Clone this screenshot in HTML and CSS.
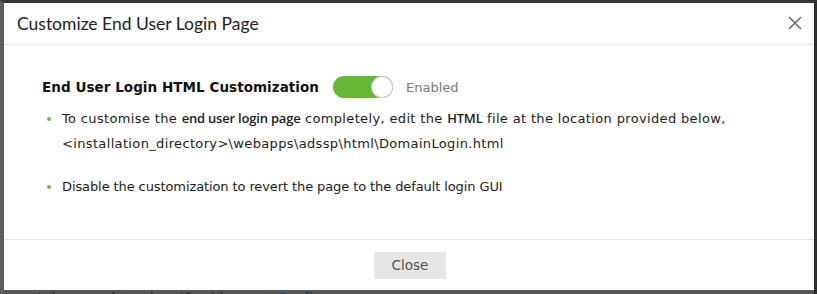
FILE: index.html
```html
<!DOCTYPE html>
<html lang="en">
<head>
  <meta charset="UTF-8" />
  <title>Customize End User Login Page</title>
  <link rel="stylesheet" href="styles.css">
</head>
<body>
  <div class="modal">
    <div class="modal-header">
      <h3>Customize End User Login Page</h3>
      <button class="close-x" aria-label="Close">
        <svg width="14" height="14" viewBox="0 0 14 14"><path d="M1 1L13 13M13 1L1 13" stroke="#6b6b6b" stroke-width="1.6" fill="none"/></svg>
      </button>
    </div>
    <div class="modal-body">
      <div class="setting-row">
        <span class="setting-name">End User Login HTML Customization</span>
        <span class="toggle on"><span class="knob"></span></span>
        <span class="toggle-state">Enabled</span>
      </div>
      <ul class="notes">
        <li class="wide">To customise the <b>end user login page</b> completely, edit the <b>HTML</b> file at the location provided below,<br>&lt;installation_directory&gt;\webapps\adssp\html\DomainLogin.html</li>
        <li>Disable the customization to revert the page to the default login GUI</li>
      </ul>
    </div>
    <div class="modal-footer">
      <button class="btn-close">Close</button>
    </div>
  </div>
  <div class="page-behind">r portal access based on IP addresses. <a>Configure now</a></div>
</body>
</html>
```

FILE: styles.css
```css
body {
  margin: 0;
  background: #565656;
  border-top: 3px solid #353535;
  border-left: 4px solid #5e5e5e;
  border-right: 3px solid #2e2e2e;
  height: 291px;
  overflow: hidden;
  font-family: 'DejaVu Sans', Verdana, sans-serif;
}
.modal {
  background: #fff;
  height: 287px;
  display: flex;
  flex-direction: column;
}
.modal-header {
  height: 41px;
  border-bottom: 1px solid #e3e3e3;
  display: flex;
  align-items: center;
  justify-content: space-between;
  padding: 0 12px 0 13px;
}
.modal-header h3 {
  margin: 0;
  font-family: 'Lato', sans-serif;
  font-weight: normal;
  font-size: 17.5px;
  color: #222;
}
.close-x {
  background: none;
  border: none;
  padding: 0;
  width: 14px;
  height: 14px;
  cursor: pointer;
  margin-bottom: 2px;
}
.modal-body {
  flex: 1;
  padding: 31px 20px 0 38px;
}
.setting-row {
  display: flex;
  align-items: center;
  height: 22px;
}
.setting-name {
  font-weight: bold;
  font-size: 13.5px;
  letter-spacing: 0.05px;
  color: #111;
}
.toggle {
  width: 60px;
  height: 22px;
  border-radius: 11px;
  background: #67b834;
  margin-left: 14px;
  display: flex;
  align-items: center;
  justify-content: flex-end;
  box-sizing: border-box;
  padding-right: 1px;
}
.knob {
  width: 20px;
  height: 20px;
  border-radius: 50%;
  background: #fff;
  box-shadow: 0 0 0 1px #cfcfcf;
}
.toggle-state {
  margin-left: 13px;
  font-size: 13px;
  color: #7a7a7a;
}
.notes {
  list-style: none;
  margin: 8px 0 0;
  padding: 0 0 0 20px;
  font-size: 13px;
  letter-spacing: -0.1px;
  line-height: 25px;
  color: #1c1c1c;
}
.notes li {
  position: relative;
  margin-bottom: 18px;
}
.notes li.wide {
  letter-spacing: 0.35px;
}
.notes li::before {
  content: "";
  position: absolute;
  left: -15px;
  top: 11px;
  width: 4px;
  height: 4px;
  border-radius: 50%;
  background: #6cbf3a;
}
.notes b {
  font-family: 'Open Sans', sans-serif;
  font-weight: 600;
  letter-spacing: -0.2px;
}
.modal-footer {
  height: 51px;
  border-top: 1px solid #e3e3e3;
  display: flex;
  align-items: center;
  justify-content: center;
  box-sizing: border-box;
  padding-left: 2px;
}
.btn-close {
  width: 72px;
  height: 27px;
  background: #e6e6e6;
  border: none;
  font-family: 'DejaVu Sans', Verdana, sans-serif;
  font-size: 13.5px;
  color: #555;
  cursor: pointer;
}
.page-behind {
  font-size: 14px;
  color: #1f1f1f;
  line-height: 16px;
  white-space: nowrap;
}
.page-behind a {
  color: #0b3a5e;
}
```
